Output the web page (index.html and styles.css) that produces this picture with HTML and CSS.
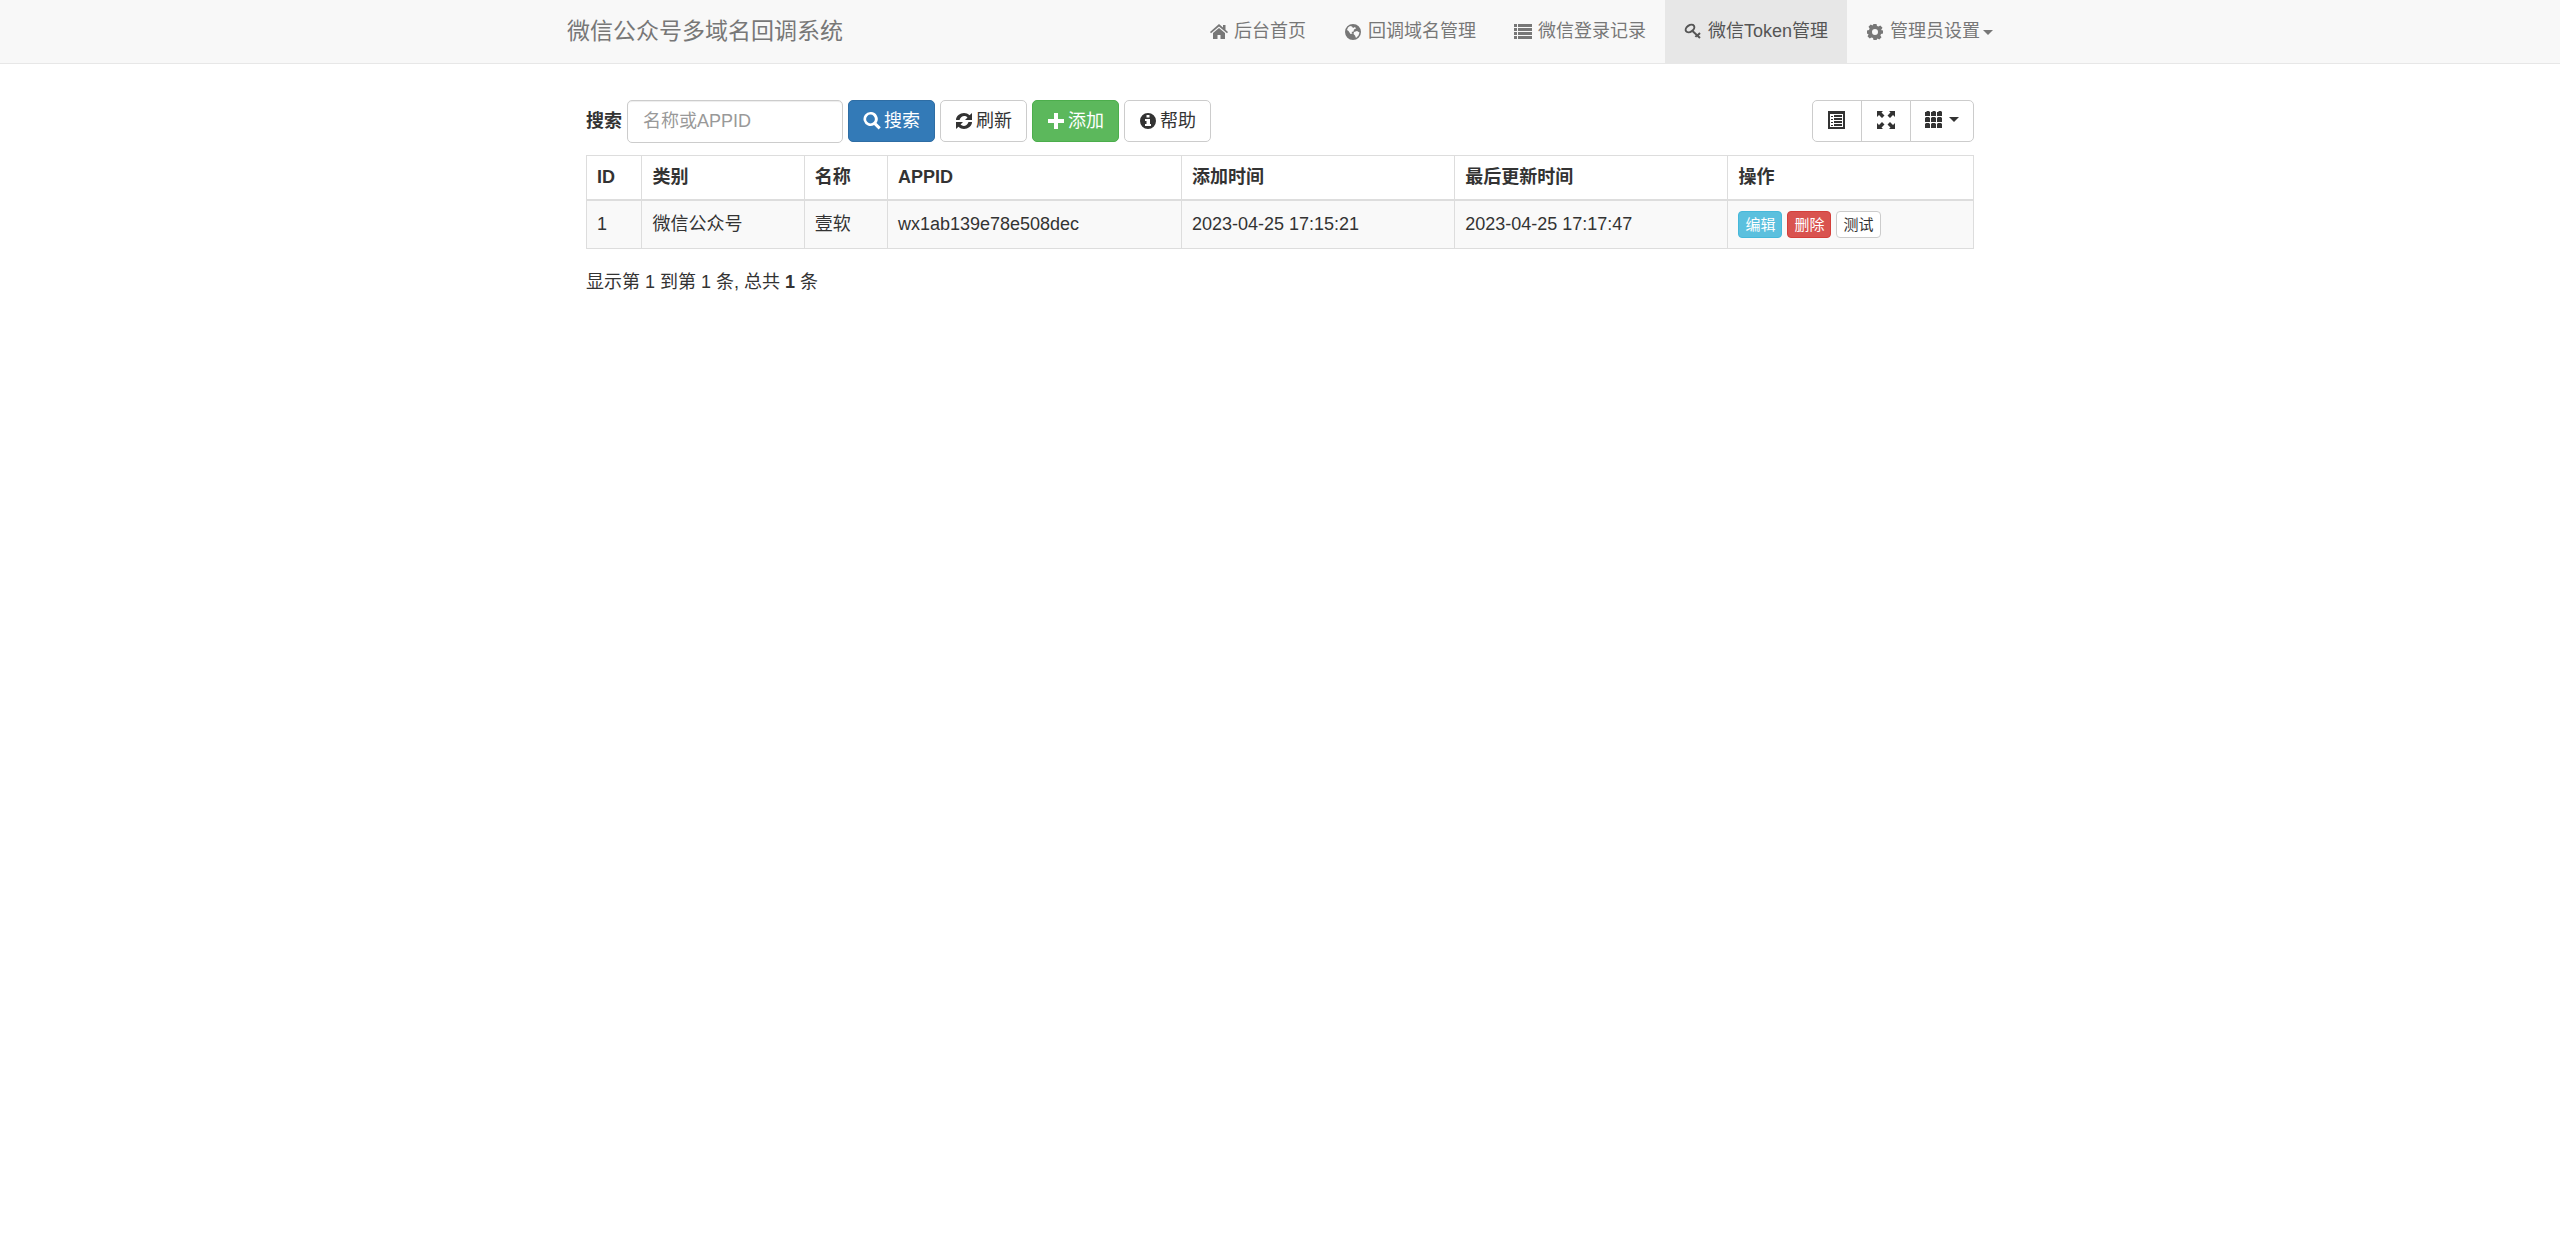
FILE: index.html
```html
<!DOCTYPE html>
<html lang="zh-CN">
<head>
    <meta charset="UTF-8">
    <meta name="viewport" content="width=device-width, initial-scale=1.0">
    <title>微信Token管理</title>
    <link rel="stylesheet" href="styles.css">
</head>
<body>

    <nav class="navbar">
        <div class="container navbar-inner">
            <a class="navbar-brand" href="#">微信公众号多域名回调系统</a>
            <ul class="nav">
                <li><a href="#">
                    <svg class="icon" viewBox="0 0 18 18"><path d="M9 1 0 9l1 1.200L9 3.400l8 6.800L18 9l-2.500-2.200V2H13v2.500zM9 5 3 10v6h4.500v-4h3v4H15v-6z"/></svg>
                    <span>后台首页</span>
                </a></li>
                <li><a href="#">
                    <svg class="icon" viewBox="0 0 18 18"><path fill-rule="evenodd" d="M9 1a8 8 0 1 0 0 16A8 8 0 0 0 9 1zM4 4.500 6 3l2 .5 1 1.500 2-1 1 1.500-2 1-.5 2-2 .5 1 1.500-2 .5L4.500 8 3 7zM10 9l3-1 2.500 1.500-1 3L12 15l-1-2.500L9.500 11z"/></svg>
                    <span>回调域名管理</span>
                </a></li>
                <li><a href="#">
                    <svg class="icon" viewBox="0 0 18 18"><path d="M0 1h3v3H0zM4 1h14v3H4zM0 5h3v3H0zM4 5h14v3H4zM0 9h3v3H0zM4 9h14v3H4zM0 13h3v3H0zM4 13h14v3H4z"/></svg>
                    <span>微信登录记录</span>
                </a></li>
                <li class="active"><a href="#">
                    <svg class="icon icon-line" viewBox="0 0 18 18"><ellipse cx="6" cy="5.500" rx="4.800" ry="3.200" transform="rotate(-35 6 5.500)"/><path d="m8.500 8 7.500 7M13.500 12.500l2.500-2.500M11.500 14l1.500-2"/></svg>
                    <span>微信Token管理</span>
                </a></li>
                <li><a href="#">
                    <svg class="icon" viewBox="0 0 18 18"><path fill-rule="evenodd" d="M7.500 1h3l.5 2 1.500.6 1.800-1.100 2.200 2.200-1.100 1.800L15 7l2 .5v3L15 11l-.6 1.500 1.100 1.800-2.200 2.200-1.800-1.100L10.500 17h-3L7 15l-1.500-.6-1.800 1.100-2.200-2.200 1.100-1.800L1 10.500v-3L3 7l.6-1.500-1.100-1.800 2.200-2.200 1.800 1.100zM9 6a3 3 0 1 0 0 6 3 3 0 0 0 0-6z"/></svg>
                    <span>管理员设置<b class="caret"></b></span>
                </a></li>
            </ul>
        </div>
    </nav>

    <main class="container content">
        <div class="toolbar">
            <form class="search-form">
                <label for="search-input">搜索</label>
                <input type="text" id="search-input" class="form-control" placeholder="名称或APPID">
                <button type="button" class="btn btn-primary">
                    <svg class="icon" viewBox="0 0 18 18"><path fill-rule="evenodd" d="M7.500 0a7 7 0 1 0 3.600 13l4.500 4.500 2.200-2.200-4.300-4.300A7 7 0 0 0 7.500 0zm0 2.600a4.400 4.400 0 1 1 0 8.800 4.400 4.400 0 0 1 0-8.800z"/></svg>搜索
                </button>
                <button type="button" class="btn">
                    <svg class="icon" viewBox="0 0 18 18"><path d="M1 8c0-4 4-7 8-7 2 0 4 .8 5.500 2.200L17 1v7h-7l2.500-2.600C10 3 6 3.500 4.500 8zM17 10c0 4-4 7-8 7-2 0-4-.8-5.500-2.200L1 17v-7h7l-2.500 2.600c2.500 2.400 6.500 1.900 8-2.600z"/></svg>刷新
                </button>
                <button type="button" class="btn btn-success">
                    <svg class="icon" viewBox="0 0 18 18"><path d="M7 1h4v6h6v4h-6v6H7v-6H1V7h6z"/></svg>添加
                </button>
                <button type="button" class="btn">
                    <svg class="icon" viewBox="0 0 18 18"><path fill-rule="evenodd" d="M9 1a8 8 0 1 0 0 16A8 8 0 0 0 9 1zM7.500 3h3v2.500h-3zM6 7h5v5h1v2H6v-2h1.500V9H6z"/></svg>帮助
                </button>
            </form>
            <div class="btn-group">
                <button type="button" class="btn" aria-label="切换视图">
                    <svg class="icon" viewBox="0 0 18 18"><path fill-rule="evenodd" d="M0 0h17v18H0zM2 3v13h13V3zM3 5h2v1H3zM6 4h8v2H6zM3 8h2v1H3zM6 7h8v2H6zM3 11h2v1H3zM6 10h8v2H6zM3 14h2v1H3zM6 13h8v2H6z"/></svg>
                </button>
                <button type="button" class="btn" aria-label="全屏">
                    <svg class="icon" viewBox="0 0 18 18"><path d="M0 0h6L4.500 1.500l3 3-2.500 2.500-3-3L0 6zM18 0v6l-2-2-3 3-2.500-2.500 3-3L12 0zM0 18v-6l2 2 3-3 2.500 2.500-3 3L6 18zM18 18h-6l1.500-1.500-3-3L13 11l3 3 2-2z"/></svg>
                </button>
                <button type="button" class="btn" aria-label="列">
                    <svg class="icon" viewBox="0 0 18 18"><path d="M1 1l1-1h2l1 1v4H0V1zM7 1l1-1h2l1 1v4H6V1zM13 1l1-1h2l1 1v4h-5V1zM0 7l1-1h3l1 1v4H0zM6 7l1-1h3l1 1v4H6zM12 7l1-1h3l1 1v4h-5zM0 13l1-1h3l1 1v4H0zM6 13l1-1h3l1 1v4H6zM12 13l1-1h3l1 1v4h-5z"/></svg>
                    <b class="caret"></b>
                </button>
            </div>
        </div>

        <table class="table">
            <thead>
                <tr>
                    <th class="col-id">ID</th>
                    <th class="col-type">类别</th>
                    <th class="col-name">名称</th>
                    <th class="col-appid">APPID</th>
                    <th class="col-time">添加时间</th>
                    <th class="col-time">最后更新时间</th>
                    <th>操作</th>
                </tr>
            </thead>
            <tbody>
                <tr>
                    <td>1</td>
                    <td>微信公众号</td>
                    <td>壹软</td>
                    <td>wx1ab139e78e508dec</td>
                    <td>2023-04-25 17:15:21</td>
                    <td>2023-04-25 17:17:47</td>
                    <td>
                        <div class="actions">
                            <button type="button" class="btn btn-xs btn-info">编辑</button>
                            <button type="button" class="btn btn-xs btn-danger">删除</button>
                            <button type="button" class="btn btn-xs">测试</button>
                        </div>
                    </td>
                </tr>
            </tbody>
        </table>

        <p class="pagination-info">显示第 1 到第 1 条, 总共 <b>1</b> 条</p>
    </main>

</body>
</html>
```
FILE: styles.css
```css
* {
    box-sizing: border-box;
}

body {
    margin: 0;
    background-color: #fff;
    color: #333;
    font-family: "Liberation Sans", "Noto Sans CJK SC", sans-serif;
    font-size: 18px;
    line-height: 25px;
}

.container {
    width: 100%;
    max-width: 1464px;
    margin: 0 auto;
}

.icon {
    width: 18px;
    height: 18px;
    flex: none;
    fill: currentColor;
}

.icon-line {
    fill: none;
    stroke: currentColor;
    stroke-width: 2;
}

.caret {
    display: inline-block;
    margin-left: 3px;
    vertical-align: middle;
    border-top: 5px solid;
    border-left: 5px solid transparent;
    border-right: 5px solid transparent;
}

/* Navbar */
.navbar {
    background-color: #f8f8f8;
    border-bottom: 1px solid #e7e7e7;
}

.navbar-inner {
    display: flex;
    justify-content: space-between;
}

.navbar-brand {
    padding: 19px;
    color: #777;
    font-size: 23px;
    text-decoration: none;
}

.nav {
    display: flex;
    margin: 0;
    padding: 0;
    list-style: none;
}

.nav a {
    display: flex;
    align-items: center;
    gap: 6px;
    padding: 19px;
    color: #777;
    text-decoration: none;
}

.nav .active a {
    background-color: #e7e7e7;
    color: #555;
}

/* Toolbar */
.content {
    padding: 36px 38px;
}

.toolbar,
.search-form {
    display: flex;
    align-items: flex-start;
    justify-content: space-between;
}

.search-form {
    gap: 5px;
}

.search-form label {
    font-weight: bold;
    line-height: 42px;
}

.form-control {
    width: 216px;
    height: 43px;
    padding: 8px 15px;
    border: 1px solid #ccc;
    border-radius: 5px;
    box-shadow: inset 0 1px 1px rgba(0, 0, 0, 0.075);
    color: #555;
    font: inherit;
}

.form-control::placeholder {
    color: #999;
    opacity: 1;
}

.btn {
    display: flex;
    align-items: center;
    justify-content: center;
    gap: 3px;
    height: 42px;
    padding: 0 14px;
    border: 1px solid #ccc;
    border-radius: 5px;
    background-color: #fff;
    color: #333;
    font: inherit;
    cursor: pointer;
}

.btn-primary {
    border-color: #2e6da4;
    background-color: #337ab7;
    color: #fff;
}

.btn-success {
    border-color: #4cae4c;
    background-color: #5cb85c;
    color: #fff;
}

.btn-info {
    border-color: #46b8da;
    background-color: #5bc0de;
    color: #fff;
}

.btn-danger {
    border-color: #d43f3a;
    background-color: #d9534f;
    color: #fff;
}

.btn-xs {
    height: 27px;
    padding: 0 6px;
    border-radius: 4px;
    font-size: 15px;
}

.btn-group {
    display: flex;
}

.btn-group .btn {
    padding: 0 15px 3px;
    border-radius: 0;
}

.btn-group .btn + .btn {
    margin-left: -1px;
}

.btn-group .btn:first-child {
    border-radius: 5px 0 0 5px;
}

.btn-group .btn:last-child {
    padding: 0 14px 3px;
    border-radius: 0 5px 5px 0;
}

/* Table */
.table {
    width: 100%;
    margin-top: 12px;
    border-collapse: collapse;
    table-layout: fixed;
}

.table th,
.table td {
    padding: 10px;
    border: 1px solid #ddd;
    text-align: left;
}

.table th {
    padding: 9px 10px;
    border-bottom-width: 2px;
}

.table tbody tr {
    background-color: #f9f9f9;
}

.col-id {
    width: 4%;
}

.col-type {
    width: 11.7%;
}

.col-name {
    width: 6%;
}

.col-appid {
    width: 21.2%;
}

.col-time {
    width: 19.7%;
}

.actions {
    display: flex;
    gap: 5px;
}

.pagination-info {
    margin: 21px 0;
}
```
